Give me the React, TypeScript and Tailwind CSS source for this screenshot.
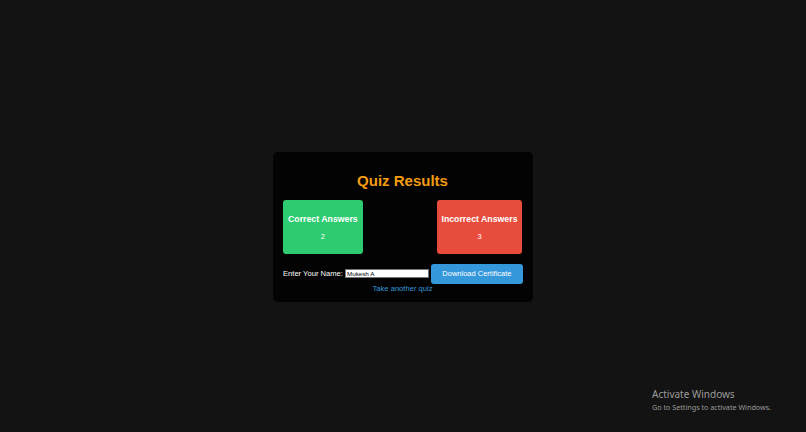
export default function App() {
  const correct = 2;
  const incorrect = 3;

  return (
    <div className="relative h-screen w-full overflow-hidden bg-[#131313] font-['Liberation_Sans',Arial,sans-serif]">
      <div className="flex h-full items-center justify-center pt-[21px]">
        {/* Results card */}
        <div className="w-[260px] rounded-[5px] bg-[#030303] pt-[10px] pr-[11px] pb-[9px] pl-[10px] text-white">
          <h2 className="mt-[10px] mb-[11px] text-center text-[15px] leading-[17px] font-bold text-[#f39c12]">
            Quiz Results
          </h2>

          <div className="flex justify-between">
            <div className="rounded-[3px] bg-[#2ecc71] px-[5px] pt-[14px] pb-[12.5px] text-center">
              <h3 className="text-[8.75px] leading-[10px] font-bold">Correct Answers</h3>
              <p className="mt-[8.5px] text-[7.5px] leading-[9px]">{correct}</p>
            </div>
            <div className="rounded-[3px] bg-[#e74c3c] px-[4.5px] pt-[14px] pb-[12.5px] text-center">
              <h3 className="text-[8.75px] leading-[10px] font-bold">Incorrect Answers</h3>
              <p className="mt-[8.5px] text-[7.5px] leading-[9px]">{incorrect}</p>
            </div>
          </div>

          <div className="mt-[10px] flex items-center gap-[2px]">
            <label htmlFor="name" className="shrink-0 text-[7.6px] leading-[9px]">
              Enter Your Name:
            </label>
            <input
              id="name"
              type="text"
              defaultValue="Mukesh A"
              className="h-[9px] w-[84px] shrink-0 border border-[#767676] bg-white px-[1px] font-['Liberation_Sans',Arial,sans-serif] text-[6.25px] leading-[7px] text-black outline-none"
            />
            <button className="h-[20px] w-[92px] shrink-0 rounded-[3px] bg-[#3498db] text-[7.5px] leading-[9px] text-white">
              Download Certificate
            </button>
          </div>

          <div className="text-center text-[7.6px] leading-[9px]">
            <a href="#" className="text-[#3498db]">
              Take another quiz
            </a>
          </div>
        </div>
      </div>

      {/* Windows activation watermark */}
      <div className="pointer-events-none absolute top-[388px] left-[652px] font-['Noto_Sans',sans-serif] text-[#9b9b9b]">
        <div className="text-[10px] leading-[13px]">Activate Windows</div>
        <div className="mt-[1px] text-[7.2px] leading-[10px]">Go to Settings to activate Windows.</div>
      </div>
    </div>
  );
}
